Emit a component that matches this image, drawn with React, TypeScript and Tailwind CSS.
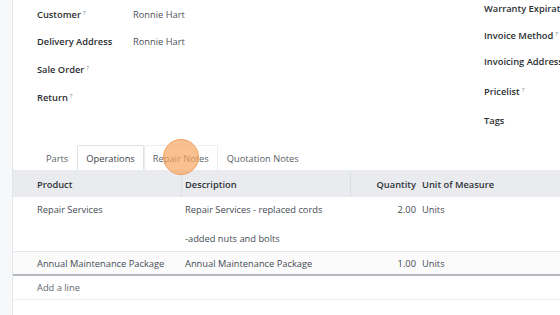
export default function App() {
  return (
    <div className="flex w-[560px] h-[315px] overflow-hidden bg-white text-[9.3px] text-[#444b53] font-['Open_Sans',sans-serif]">
      {/* page gutter */}
      <div className="w-[12px] shrink-0 bg-[#f7f8f9]" />

      <div className="relative flex-1 min-w-0 border-l border-[#e4e6e9] bg-white">
        {/* Form fields */}
        <div className="flex h-[145px] pt-[1px]">
          <div className="flex flex-col pl-[24px] w-[471px] shrink-0">
            <FieldRow label="Customer" help value="Ronnie Hart" h="h-[27px]" />
            <FieldRow label="Delivery Address" value="Ronnie Hart" h="h-[27px]" />
            <FieldRow label="Sale Order" help h="h-[30px]" />
            <FieldRow label="Return" help h="h-[26px]" />
          </div>
          <div className="flex flex-col whitespace-nowrap font-semibold text-[#2b2f33]">
            <div className="h-[16px] leading-[16px]">Warranty Expiration</div>
            <div className="h-[16px] leading-[16px] mt-[11px]">
              Invoice Method<sup className="ml-[2px] text-[6px] font-normal text-[#6c757d]">?</sup>
            </div>
            <div className="h-[16px] leading-[16px] mt-[10px]">Invoicing Address</div>
            <div className="h-[16px] leading-[16px] mt-[14px]">
              Pricelist<sup className="ml-[2px] text-[6px] font-normal text-[#6c757d]">?</sup>
            </div>
            <div className="h-[16px] leading-[16px] mt-[13px]">Tags</div>
          </div>
        </div>

        {/* Tabs */}
        <div className="flex h-[25px] pl-[24px] items-stretch">
          <Tab label="Parts" />
          <Tab label="Operations" active />
          <Tab label="Repair Notes" hover />
          <Tab label="Quotation Notes" />
        </div>

        {/* Lines table */}
        <div className="flex h-[27px] pt-[2px] items-center bg-[#e9ebee] font-semibold text-[#2f3338]">
          <div className="w-[168px] pl-[24px] h-full flex items-center">Product</div>
          <div className="w-[169px] pl-[3px] h-full flex items-center border-l border-[#dcdfe3]">Description</div>
          <div className="w-[70px] pr-[4px] h-full flex items-center justify-end border-l border-[#dcdfe3]">Quantity</div>
          <div className="pl-[2px]">Unit of Measure</div>
        </div>

        <div className="flex pt-[6px] pb-[4px] leading-[14.5px] border-b border-[#e6e8eb]">
          <div className="w-[168px] pl-[24px]">Repair Services</div>
          <div className="w-[169px] pl-[4px] whitespace-pre">{"Repair Services - replaced cords\n\n-added nuts and bolts"}</div>
          <div className="w-[70px] pr-[4px] text-right">2.00</div>
          <div className="pl-[2px]">Units</div>
        </div>

        <div className="flex pt-[5px] pb-[3px] leading-[14.5px] border-b-2 border-[#b4b9bf] bg-[#fbfbfc]">
          <div className="w-[168px] pl-[24px]">Annual Maintenance Package</div>
          <div className="w-[169px] pl-[4px]">Annual Maintenance Package</div>
          <div className="w-[70px] pr-[4px] text-right">1.00</div>
          <div className="pl-[2px]">Units</div>
        </div>

        <div className="h-[24px] pt-[1px] flex items-center pl-[24px] border-b border-[#eceef0] text-[#5f666d]">
          Add a line
        </div>

        {/* click marker */}
        <div className="absolute left-[150px] top-[139px] w-[36px] h-[36px] rounded-full bg-[#f7a661]/70 border border-[#f0a060]" />
      </div>
    </div>
  );
}

function FieldRow({ label, value, help, h }: { label: string; value?: string; help?: boolean; h: string }) {
  return (
    <div className={`flex items-center ${h}`}>
      <div className="w-[96px] shrink-0 font-semibold text-[#2b2f33]">
        {label}
        {help && <sup className="ml-[2px] text-[6px] font-normal text-[#6c757d]">?</sup>}
      </div>
      {value && <div className="text-[#4a5057]">{value}</div>}
    </div>
  );
}

function Tab({ label, active, hover }: { label: string; active?: boolean; hover?: boolean }) {
  const cls = active
    ? "border-[#dee2e6] bg-white text-[#3d4349]"
    : hover
    ? "border-[#eceef0] text-[#5b6168]"
    : "border-transparent text-[#5b6168]";
  return (
    <div className={`flex items-center pt-[2px] px-[8px] border-t border-l border-r rounded-t-[2px] ${cls}`}>
      {label}
    </div>
  );
}
